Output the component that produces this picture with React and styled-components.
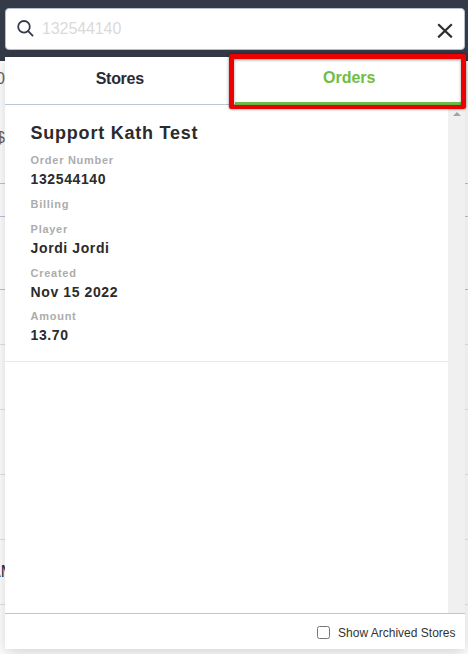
import React from 'react'
import styled, { createGlobalStyle } from 'styled-components'

const GlobalStyle = createGlobalStyle`
    * {
        box-sizing: border-box;
    }

    body {
        margin: 0;
        background: #fff;
        font-family: "Liberation Sans", Arial, sans-serif;
        overflow: hidden;
    }
`

const Page = styled.div`
    position: relative;
    width: 468px;
    height: 654px;
    overflow: hidden;
`

const Header = styled.div`
    height: 61px;
    padding: 8px 3px 0 5px;
    background: #353a48;
`

const SearchBox = styled.div`
    display: flex;
    align-items: center;
    height: 42px;
    padding: 0 11px 0 11px;
    border: 1px solid #b4c0cc;
    border-radius: 4px;
    background: #fff;
`

const SearchText = styled.div`
    flex: 1;
    padding-left: 7px;
    color: #dadada;
    font-size: 16px;
    letter-spacing: -0.1px;
    line-height: 20px;
`

const BackRow = styled.div`
    height: ${props => props.$height}px;
    padding-top: ${props => props.$top || 0}px;
    border-bottom: 1px solid ${props => props.$line || '#e1e2ec'};
    color: ${props => props.$color || '#5f6368'};
    font-size: 16px;
    line-height: 18px;
`

const BackText = styled.div`
    width: 5px;
    height: 18px;
    margin-bottom: ${props => props.$gap || 0}px;
    overflow: hidden;
    direction: ${props => (props.$indent ? 'ltr' : 'rtl')};
    text-indent: ${props => props.$indent || 0}px;
`

const Dropdown = styled.div`
    position: absolute;
    top: 57px;
    left: 5px;
    display: flex;
    flex-direction: column;
    width: 460px;
    height: 592px;
    background: #fff;
    box-shadow: 0 4px 14px rgba(0, 0, 0, 0.18);
`

const Tabs = styled.div`
    display: flex;
    height: 48px;
    border-bottom: 1px solid #b9c8d2;
`

const Tab = styled.div`
    flex: 1;
    height: 48px;
    padding: ${props => (props.$active ? '11px 1px 0 0' : '12px 0 0')};
    border-bottom: ${props => (props.$active ? '3px solid #6fbe44' : 'none')};
    color: ${props => (props.$active ? '#6fbe44' : '#262b37')};
    font-size: 16px;
    font-weight: bold;
    letter-spacing: ${props => (props.$active ? 0 : -0.3)}px;
    line-height: 20px;
    text-align: center;
`

const Highlight = styled.div`
    position: absolute;
    top: 54px;
    left: 229px;
    width: 237px;
    height: 55px;
    border: 5px solid #ec0000;
    border-bottom-width: 4px;
    border-radius: 2px;
    box-shadow: 0 0 3px rgba(0, 0, 0, 0.5), inset 0 1px 3px rgba(0, 0, 0, 0.4);
`

const Results = styled.div`
    display: flex;
    flex: 1;
`

const List = styled.div`
    flex: 1;
`

const Scrollbar = styled.div`
    display: flex;
    justify-content: center;
    width: 17px;
    padding-top: 7px;
    background: #f0f0f0;
`

const Order = styled.div`
    height: 257px;
    padding: 17px 25px 0 25.6px;
    border-bottom: 1px solid #e8e8e8;
    color: #2b2b2b;
    font-weight: bold;
`

const StoreName = styled.div`
    margin-bottom: 8px;
    font-size: 18px;
    letter-spacing: 0.76px;
    line-height: 22px;
`

const Field = styled.div`
    height: ${props => props.$height}px;
`

const Label = styled.div`
    color: #acacac;
    font-size: 11px;
    letter-spacing: 0.72px;
    line-height: 16px;
`

const Value = styled.div`
    padding-top: 2px;
    font-size: 14px;
    letter-spacing: 0.6px;
    line-height: 18px;
`

const Footer = styled.label`
    display: flex;
    align-items: center;
    justify-content: flex-end;
    height: 36px;
    padding: 2px 9.5px 0 0;
    border-top: 1px solid #bcc6d0;
    color: #333;
    font-size: 12px;
`

const Checkbox = styled.input`
    width: 13px;
    height: 13px;
    margin: 0 8px 0 0;
`

const fields = [
    { label: 'Order Number', value: '132544140', height: 44 },
    { label: 'Billing', value: '', height: 25 },
    { label: 'Player', value: 'Jordi Jordi', height: 44 },
    { label: 'Created', value: 'Nov 15 2022', height: 43 },
    { label: 'Amount', value: '13.70', height: 43 },
]

const SearchIcon = () => (
    <svg width="18" height="18" viewBox="0 0 18 18" fill="none" stroke="#353a48" strokeWidth="1.8">
        <circle cx="7" cy="6.8" r="5.8" />
        <path d="M11.2 11.2L15.6 15.6" strokeLinecap="round" />
    </svg>
)

const CloseIcon = () => (
    <svg width="16" height="18" viewBox="0 0 16 18" stroke="#2f2f2f" strokeWidth="2.2">
        <path d="M1.2 4.2L14.8 17.4M14.8 4.2L1.2 17.4" />
    </svg>
)

export default () => (
    <Page>
        <GlobalStyle />
        <Header>
            <SearchBox>
                <SearchIcon />
                <SearchText>132544140</SearchText>
                <CloseIcon />
            </SearchBox>
        </Header>
        <BackRow $height={123} $top={9} $line="#b9c3d3">
            <BackText $gap={41}>0</BackText>
            <BackText>$</BackText>
        </BackRow>
        <BackRow $height={33} $line="#b9c3d3" />
        <BackRow $height={73} $line="#b9c3d3" />
        <BackRow $height={55} />
        <BackRow $height={65} />
        <BackRow $height={65} />
        <BackRow $height={65} />
        <BackRow $height={65} $top={23} $color="#24264f">
            <BackText $indent={-9.9}>AM</BackText>
        </BackRow>
        <Dropdown>
            <Tabs>
                <Tab>Stores</Tab>
                <Tab $active>Orders</Tab>
            </Tabs>
            <Results>
                <List>
                    <Order>
                        <StoreName>Support Kath Test</StoreName>
                        {fields.map(({ label, value, height }) => (
                            <Field key={label} $height={height}>
                                <Label>{label}</Label>
                                {value && <Value>{value}</Value>}
                            </Field>
                        ))}
                    </Order>
                </List>
                <Scrollbar>
                    <svg width="8" height="4" viewBox="0 0 8 4">
                        <path d="M0 4L4 0L8 4Z" fill="#a3a3a3" />
                    </svg>
                </Scrollbar>
            </Results>
            <Footer>
                <Checkbox type="checkbox" />
                Show Archived Stores
            </Footer>
        </Dropdown>
        <Highlight />
    </Page>
)
